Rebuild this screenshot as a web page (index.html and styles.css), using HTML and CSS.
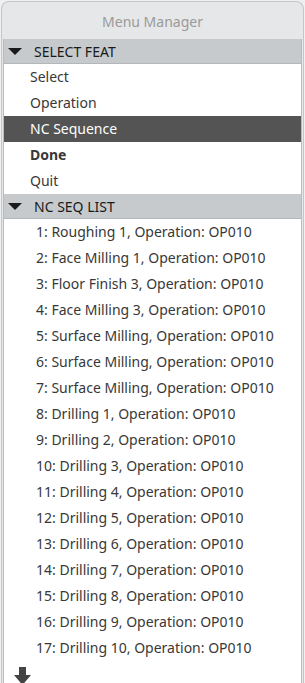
FILE: index.html
```html
<!DOCTYPE html>
<html lang="en">
<head>
    <meta charset="UTF-8">
    <meta name="viewport" content="width=device-width, initial-scale=1.0">
    <title>Menu Manager</title>
    <link rel="stylesheet" href="styles.css">
</head>
<body>
    <div class="window">
        <div class="title">Menu Manager</div>

        <div class="panel">
            <div class="section-head"><span class="caret"></span>SELECT FEAT</div>
            <ul class="menu">
                <li>Select</li>
                <li>Operation</li>
                <li class="active">NC Sequence</li>
                <li class="bold">Done</li>
                <li>Quit</li>
            </ul>

            <div class="section-head"><span class="caret"></span>NC SEQ LIST</div>
            <ul class="menu list">
                <li>1: Roughing 1, Operation: OP010</li>
                <li>2: Face Milling 1, Operation: OP010</li>
                <li>3: Floor Finish 3, Operation: OP010</li>
                <li>4: Face Milling 3, Operation: OP010</li>
                <li>5: Surface Milling, Operation: OP010</li>
                <li>6: Surface Milling, Operation: OP010</li>
                <li>7: Surface Milling, Operation: OP010</li>
                <li>8: Drilling 1, Operation: OP010</li>
                <li>9: Drilling 2, Operation: OP010</li>
                <li>10: Drilling 3, Operation: OP010</li>
                <li>11: Drilling 4, Operation: OP010</li>
                <li>12: Drilling 5, Operation: OP010</li>
                <li>13: Drilling 6, Operation: OP010</li>
                <li>14: Drilling 7, Operation: OP010</li>
                <li>15: Drilling 8, Operation: OP010</li>
                <li>16: Drilling 9, Operation: OP010</li>
                <li>17: Drilling 10, Operation: OP010</li>
            </ul>

            <div class="more">
                <svg width="17" height="20" viewBox="0 0 17 20">
                    <path d="M5 0 H12 V8 H17 L8.5 18 L0 8 H5 Z" fill="#444"/>
                </svg>
            </div>
        </div>
    </div>
</body>
</html>
```

FILE: styles.css
```css
/* Base */
* {
    box-sizing: border-box;
    margin: 0;
    padding: 0;
}

body {
    font-family: "Noto Sans", "Open Sans", sans-serif;
    background-color: #f0f0f0;
    color: #383838;
    font-size: 14px;
    height: 683px;
    overflow: hidden;
    padding: 1px 1px 0 1px;
}

/* Window frame */
.window {
    background-color: #e6e7e8;
    border: 1px solid #c4c6c8;
    border-bottom: none;
    border-radius: 8px 8px 0 0;
    height: 682px;
    padding: 0 1px 0 1px;
    display: flex;
    flex-direction: column;
}

.title {
    height: 37px;
    line-height: 40px;
    text-align: center;
    color: #9a9a9a;
    font-size: 14px;
}

/* Panel */
.panel {
    flex: 1;
    background: #fff;
    border-left: 1px solid #b9bbbd;
    border-right: 1px solid #b9bbbd;
}

.section-head {
    height: 25px;
    background-color: #c7cacd;
    color: #1a1a1a;
    display: flex;
    align-items: center;
    padding-left: 4px;
    font-size: 14px;
    border-bottom: 1px solid #b4b7ba;
}

.caret {
    width: 0;
    height: 0;
    border-left: 7px solid transparent;
    border-right: 7px solid transparent;
    border-top: 7px solid #1a1a1a;
    margin-right: 12px;
}

.menu {
    list-style: none;
}

.menu li {
    height: 26px;
    line-height: 26px;
    padding-left: 26px;
    white-space: nowrap;
}

.menu li.active {
    background-color: #545454;
    color: #fff;
}

.menu li.bold {
    font-weight: bold;
}

.list li {
    padding-left: 32px;
}

.more {
    padding: 6px 0 0 10px;
}
```
